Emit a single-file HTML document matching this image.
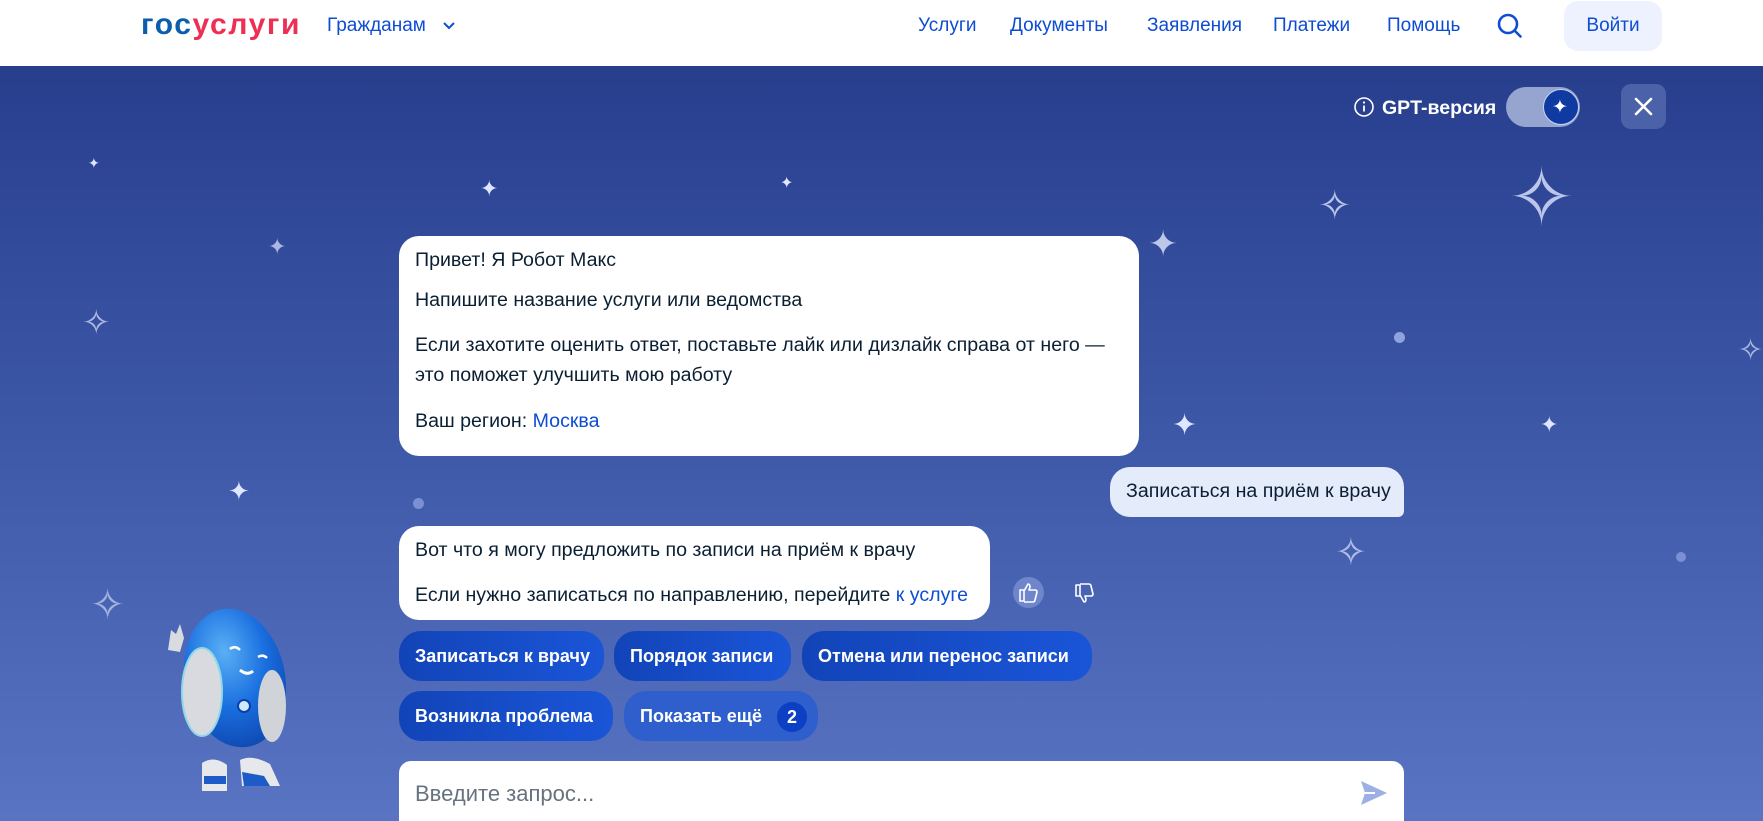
<!DOCTYPE html>
<html><head><meta charset="utf-8"><style>
*{margin:0;padding:0;box-sizing:border-box}
body{width:1763px;height:821px;overflow:hidden;font-family:"Liberation Sans",sans-serif;background:#fff;position:relative}
.hdr{position:absolute;left:0;top:0;width:1763px;height:66px;background:#fff}
.a{position:absolute;white-space:nowrap}
.nav{color:#0d4cd3;font-size:19px;top:14px}
.main{position:absolute;left:0;top:66px;width:1763px;height:755px;background:linear-gradient(180deg,#273e8d 0%,#3c56a6 45%,#5a74c4 100%);overflow:hidden}
.b{position:absolute;background:#fff;border-radius:20px;font-size:19.6px;color:#0b1f33}
.b .a{left:16px}
.btn{position:absolute;height:50px;border-radius:22px;background:linear-gradient(90deg,#1244b8,#1a55d8);color:#fff;font-size:18px;font-weight:bold;line-height:50px;padding:0 16px;white-space:nowrap}
.st{position:absolute;color:#dfe6ff;line-height:1}
</style></head><body>
<div class="hdr">
 <div class="a" style="left:141px;top:8px;font-size:30px;font-weight:bold;letter-spacing:1.6px"><span style="color:#0b5eae">гос</span><span style="color:#ee2f53">услуги</span></div>
 <div class="a nav" style="left:327px;top:15px">Гражданам</div>
 <svg class="a" style="left:442px;top:21px" width="14" height="10"><path d="M2 2l5 5 5-5" stroke="#0d4cd3" stroke-width="2" fill="none"/></svg>
 <div class="a nav" style="left:918px;top:15px">Услуги</div>
 <div class="a nav" style="left:1010px;top:15px">Документы</div>
 <div class="a nav" style="left:1147px;top:15px">Заявления</div>
 <div class="a nav" style="left:1273px;top:15px">Платежи</div>
 <div class="a nav" style="left:1387px;top:15px">Помощь</div>
 <svg class="a" style="left:1496px;top:12px" width="28" height="28"><circle cx="12" cy="12" r="9" stroke="#0d4cd3" stroke-width="2.6" fill="none"/><path d="M18.5 18.5l6 6" stroke="#0d4cd3" stroke-width="2.6" stroke-linecap="round"/></svg>
 <div class="a" style="left:1564px;top:1px;width:98px;height:50px;border-radius:14px;background:#edf2fe;color:#0d4cd3;font-size:19px;text-align:center;line-height:50px">Войти</div>
</div>
<div class="main">
 <div class="st" style="left:88px;top:90px;font-size:14px">✦</div>
 <div class="st" style="left:480px;top:112px;font-size:22px">✦</div>
 <div class="st" style="left:780px;top:110px;font-size:16px">✦</div>
 <div class="st" style="left:268px;top:170px;font-size:22px;opacity:.7">✦</div>
 <div class="st" style="left:82px;top:240px;font-size:34px;opacity:.7">✧</div>
 <div class="st" style="left:1148px;top:160px;font-size:36px;opacity:.8">✦</div>
 <div class="st" style="left:1318px;top:120px;font-size:40px;opacity:.8">✧</div>
 <div class="st" style="left:1508px;top:92px;font-size:80px;opacity:.8;font-weight:100">✧</div>
 <div class="st" style="left:1172px;top:345px;font-size:30px">✦</div>
 <div class="st" style="left:1540px;top:348px;font-size:22px">✦</div>
 <div class="st" style="left:1738px;top:270px;font-size:30px;opacity:.7">✧</div>
 <div class="st" style="left:228px;top:412px;font-size:26px">✦</div>
 <div class="st" style="left:1335px;top:468px;font-size:38px;opacity:.7">✧</div>
 <div class="st" style="left:90px;top:518px;font-size:42px;opacity:.6">✧</div>
 <div class="a" style="left:1394px;top:266px;width:11px;height:11px;border-radius:50%;background:#8fa3dc"></div>
 <div class="a" style="left:413px;top:432px;width:11px;height:11px;border-radius:50%;background:#7a90d3"></div>
 <div class="a" style="left:1676px;top:486px;width:10px;height:10px;border-radius:50%;background:#7a90d3"></div>

 <svg class="a" style="left:1353px;top:30px" width="22" height="22"><circle cx="11" cy="11" r="9" stroke="#fff" stroke-width="1.6" fill="none"/><path d="M11 9.5v6" stroke="#fff" stroke-width="1.8"/><circle cx="11" cy="6.5" r="1.1" fill="#fff"/></svg>
 <div class="a" style="left:1382px;top:31px;font-size:19.5px;color:#fff;font-weight:bold">GPT-версия</div>
 <div class="a" style="left:1506px;top:21px;width:74px;height:40px;border-radius:20px;background:#96a4d0"></div>
 <div class="a" style="left:1543px;top:23px;width:36px;height:36px;border-radius:50%;background:#0e3aa2;border:1.5px solid #c9d3f0"></div>
 <div class="a" style="left:1552px;top:30px;color:#fff;font-size:19px">✦</div>
 <div class="a" style="left:1621px;top:18px;width:45px;height:45px;border-radius:10px;background:#4b62a8"></div>
 <svg class="a" style="left:1633px;top:30px" width="21" height="21"><path d="M3 3l15 15M18 3L3 18" stroke="#fff" stroke-width="2.6" stroke-linecap="round"/></svg>

 <div class="b" style="left:399px;top:170px;width:740px;height:220px">
  <div class="a" style="top:13px">Привет! Я Робот Макс</div>
  <div class="a" style="top:53px">Напишите название услуги или ведомства</div>
  <div class="a" style="top:98px">Если захотите оценить ответ, поставьте лайк или дизлайк справа от него —</div>
  <div class="a" style="top:128px">это поможет улучшить мою работу</div>
  <div class="a" style="top:174px">Ваш регион: <span style="color:#0d4cd3">Москва</span></div>
 </div>
 <div class="b" style="left:1110px;top:401px;width:294px;height:50px;background:#e4ebfb;border-radius:20px 20px 6px 20px"><div class="a" style="top:13px;left:16px">Записаться на приём к врачу</div></div>
 <div class="b" style="left:399px;top:460px;width:591px;height:94px">
  <div class="a" style="top:13px">Вот что я могу предложить по записи на приём к врачу</div>
  <div class="a" style="top:58px">Если нужно записаться по направлению, перейдите <span style="color:#0d4cd3">к услуге</span></div>
 </div>
 <div class="a" style="left:1013px;top:511px;width:31px;height:31px;border-radius:50%;background:#6f86cc"></div>
 <svg class="a" style="left:1018px;top:515px" width="22" height="22"><path d="M2 9h4v11H2zM6 10l4-7c2 0 2 2 2 3l-1 3h6c1.5 0 2 1 2 2l-2 8c0 1-1 2-2 2H6" stroke="#fff" stroke-width="1.6" fill="none" stroke-linejoin="round"/></svg>
 <svg class="a" style="left:1074px;top:517px" width="22" height="24"><path d="M2 2h4v11H2zM6 12l4 7c2 0 2-2 2-3l-1-3h6c1.5 0 2-1 2-2l-2-8c0-1-1-2-2-2H6" stroke="#fff" stroke-width="1.6" fill="none" stroke-linejoin="round"/></svg>

 <div class="btn" style="left:399px;top:565px;width:205px">Записаться к врачу</div>
 <div class="btn" style="left:614px;top:565px;width:177px">Порядок записи</div>
 <div class="btn" style="left:802px;top:565px;width:290px">Отмена или перенос записи</div>
 <div class="btn" style="left:399px;top:625px;width:214px">Возникла проблема</div>
 <div class="btn" style="left:624px;top:625px;width:194px;background:#2f5fcc">Показать ещё</div>
 <div class="a" style="left:777px;top:636px;width:30px;height:30px;border-radius:50%;background:#0d3fc4;color:#fff;font-size:18px;font-weight:bold;text-align:center;line-height:30px">2</div>

 <div class="a" style="left:399px;top:695px;width:1005px;height:80px;background:#fff;border-radius:12px"></div>
 <div class="a" style="left:415px;top:715px;font-size:22px;color:#66727f">Введите запрос...</div>
 <svg class="a" style="left:1359px;top:713px" width="30" height="28"><path d="M2 2l26 12L2 26l4-12z" fill="#9db0e6"/><path d="M6 14h10" stroke="#fff" stroke-width="2"/></svg>

 <svg class="a" style="left:140px;top:534px" width="180" height="200">
  <defs><radialGradient id="g" cx="0.45" cy="0.3" r="0.8"><stop offset="0" stop-color="#5ab0f5"/><stop offset="0.5" stop-color="#1a6fe0"/><stop offset="1" stop-color="#0c3fa6"/></radialGradient></defs>
  <path d="M28 50l3-20 5 4 4-10 4 14-4 14z" fill="#d8dbe0"/>
  <ellipse cx="95" cy="78" rx="50" ry="70" transform="rotate(-12 95 78)" fill="url(#g)"/>
  <ellipse cx="62" cy="92" rx="20" ry="44" fill="#d8dadf" stroke="#8fd8e8" stroke-width="2"/>
  <ellipse cx="132" cy="106" rx="14" ry="36" fill="#d0d3d8"/>
  <circle cx="104" cy="106" r="6" fill="#cfe9ff" stroke="#0c3fa6" stroke-width="2"/>
  <path d="M90 49q5-4 10 1M118 57q5-3 9 1" stroke="#fff" stroke-width="2.5" fill="none"/>
  <path d="M100 70q7 6 13 1" stroke="#fff" stroke-width="3" fill="none"/>
  <path d="M62 163q12-8 25 2v26H62z" fill="#e6e8ec"/><path d="M64 176h22v8H64z" fill="#1d5cc8"/>
  <path d="M100 160q12-6 30 4l10 22h-38z" fill="#e6e8ec"/><path d="M102 172l22 4 6 10h-26z" fill="#1d5cc8"/>
 </svg>
</div>
</body></html>
